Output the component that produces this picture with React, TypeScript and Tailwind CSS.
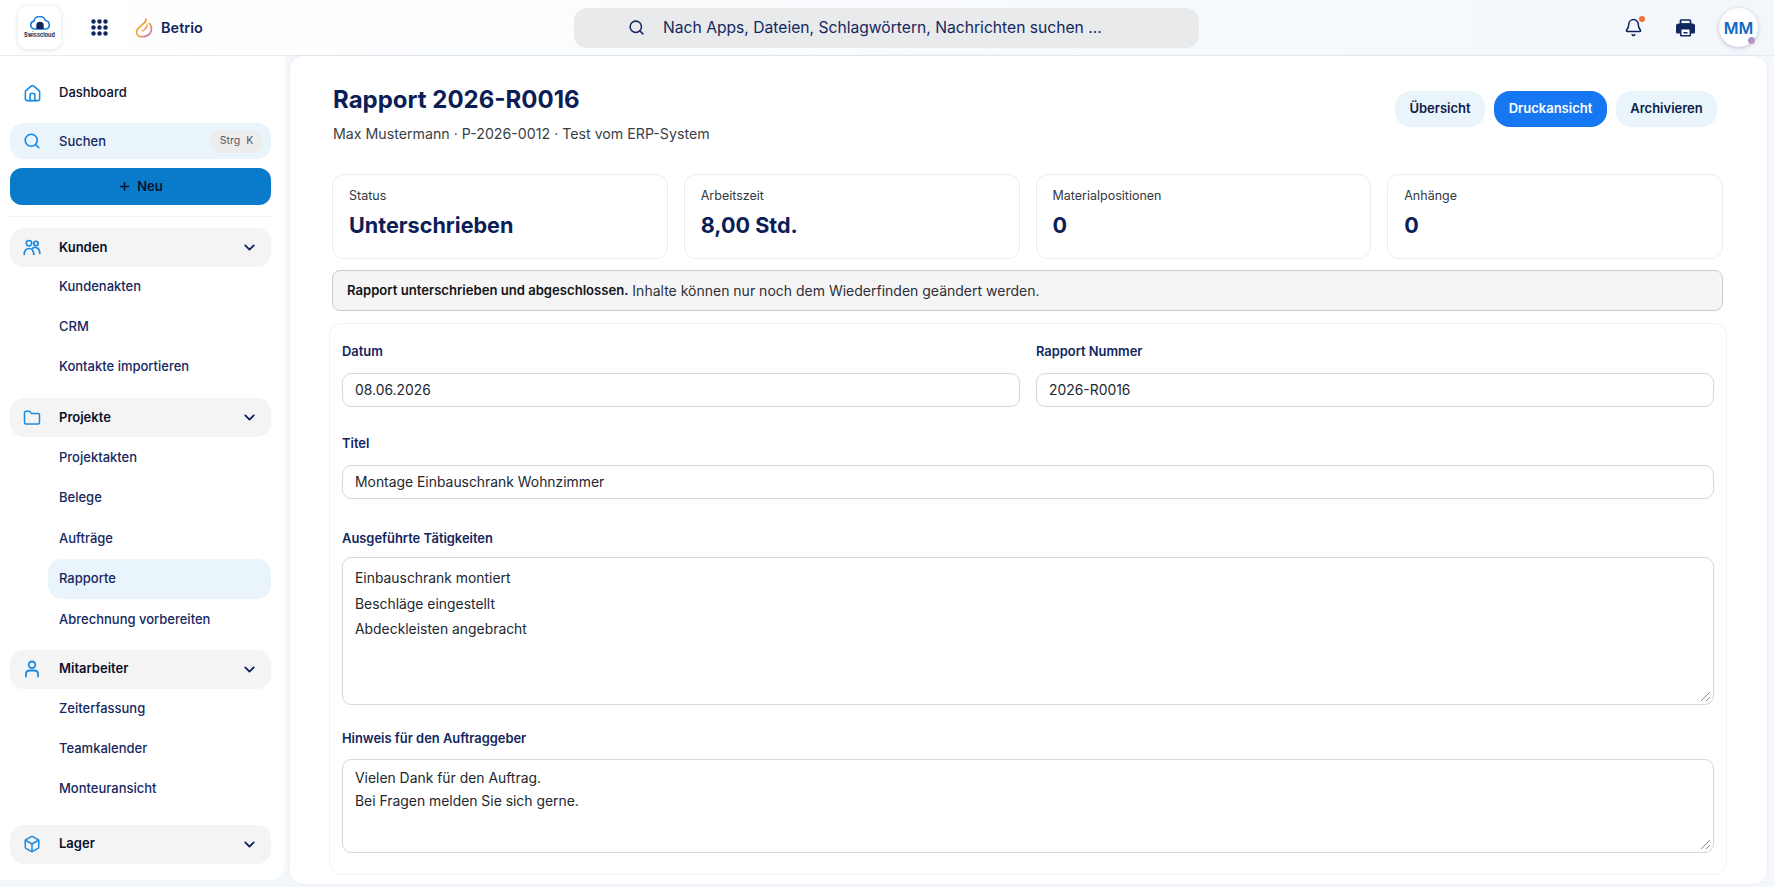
import React from "react";
import { Home, Search, Folder, Box, ChevronDown, Bell, Plus } from "lucide-react";

const font = { fontFamily: "Inter, 'Liberation Sans', sans-serif" };

function UsersIcon() {
  return (
    <svg width="18" height="18" viewBox="0 0 18 18" fill="none" stroke="currentColor" strokeWidth="1.7" strokeLinecap="round">
      <circle cx="6" cy="4.200" r="2.700" />
      <circle cx="13" cy="4.500" r="2.200" />
      <path d="M1.200 15.500c.2-3.600 2-6 4.800-6s4.600 2.400 4.800 6" />
      <path d="M9.600 9.200c.9-.7 2-1 3.100-.8 2.400.3 3.900 2.600 4.100 6" />
    </svg>
  );
}

function PersonIcon() {
  return (
    <svg width="18" height="18" viewBox="0 0 18 18" fill="none" stroke="currentColor" strokeWidth="1.800" strokeLinecap="round">
      <circle cx="9" cy="4.800" r="3.300" />
      <path d="M3 16.500v-2.500c0-2.200 1.800-3.500 4-3.500h4c2.200 0 4 1.300 4 3.500v2.500" />
    </svg>
  );
}

function PrinterIcon() {
  return (
    <svg width="19" height="18" viewBox="0 0 19 18" className="mr-[24px]">
      <path d="M4.500 5V1.800c0-.5.400-.8.800-.8h8.400c.4 0 .8.300.8.800V5Z" fill="none" stroke="#12265e" strokeWidth="1.700" />
      <path d="M2.500 4.500h14A2.500 2.500 0 0 1 19 7v6a1.500 1.500 0 0 1-1.500 1.500H15V11H4v3.500H1.500A1.500 1.500 0 0 1 0 13V7a2.500 2.500 0 0 1 2.500-2.500Z" fill="#12265e" />
      <path d="M4 9.500h11V16.500a1 1 0 0 1-1 1H5a1 1 0 0 1-1-1Z" fill="#12265e" />
      <rect x="5.500" y="10.500" width="8" height="5.500" fill="#fff" />
      <rect x="7.500" y="13" width="4" height="1.500" fill="#12265e" />
    </svg>
  );
}

function Group({ icon, label, items, active, itemH = "h-[40px]", top }: { icon: React.ReactNode; label: string; items?: string[]; active?: string; itemH?: string; top: string }) {
  return (
    <div className={`flex flex-col ${top}`}>
      <div className="flex h-[39px] items-center rounded-[14px] bg-[#f4f4f5] pl-[13px] pr-[13px]">
        <span className="flex w-[36px] text-[#1a8ae0]">{icon}</span>
        <span className="flex-1 text-[13px] font-semibold text-[#0b0f2a]">{label}</span>
        <ChevronDown size={17} strokeWidth={2.6} className="text-[#0d2258]" />
      </div>
      {items && (
        <div className="flex flex-col">
          {items.map((t) => (
            <div key={t} className={`ml-[38px] flex ${itemH} items-center rounded-[14px] pl-[11px] text-[13px] font-medium text-[#14275f] ${t === active ? "bg-[#eaf4fb]" : ""}`}>
              {t}
            </div>
          ))}
        </div>
      )}
    </div>
  );
}

function Sidebar() {
  return (
    <aside className="flex h-[824px] w-[285px] shrink-0 flex-col rounded-br-[16px] bg-white pl-[10px] pr-[14px] pt-[18px]">
      <div className="flex h-[38px] items-center pl-[13px]">
        <span className="flex w-[36px] text-[#1a8ae0]"><Home size={19} strokeWidth={2} /></span>
        <span className="text-[13px] font-medium text-[#0b0f2a]">Dashboard</span>
      </div>
      <div className="mt-[11px] flex h-[36px] items-center rounded-[14px] bg-[#eaf4fb] pl-[13px] pr-[9px]">
        <span className="flex w-[36px] text-[#1a8ae0]"><Search size={18} strokeWidth={2.2} /></span>
        <span className="flex-1 pt-[2px] text-[13px] font-medium text-[#14275f]">Suchen</span>
        <span className="flex h-[23px] w-[51px] items-center justify-center gap-[6px] rounded-[9px] bg-[#ededee] text-[10.500px] text-[#55595f]">
          <span>Strg</span><span>K</span>
        </span>
      </div>
      <div className="mt-[9px] flex h-[37px] items-center justify-center gap-[6px] rounded-[12px] bg-[#0a7bca] text-[13px] font-semibold text-[#06132c]">
        <Plus size={13} strokeWidth={2.8} />
        <span>Neu</span>
      </div>
      <div className="mb-[11px] mt-[11px] h-px bg-[#f1f2f4]" />
      <Group top="" icon={<UsersIcon />} label="Kunden" items={["Kundenakten", "CRM", "Kontakte importieren"]} />
      <Group top="mt-[11px]" itemH="h-[40.500px]" icon={<Folder size={18} strokeWidth={2} />} label="Projekte" items={["Projektakten", "Belege", "Aufträge", "Rapporte", "Abrechnung vorbereiten"]} active="Rapporte" />
      <Group top="mt-[10px]" icon={<PersonIcon />} label="Mitarbeiter" items={["Zeiterfassung", "Teamkalender", "Monteuransicht"]} />
      <Group top="mt-[16px]" icon={<Box size={18} strokeWidth={2} />} label="Lager" />
    </aside>
  );
}

function Header() {
  return (
    <header className="flex h-[56px] shrink-0 items-center justify-between border-b border-[#e9ebee] bg-gradient-to-r from-white to-[#f3f7fc] pl-[18px] pr-[16px]">
      <div className="flex w-[556px] items-center">
        <div className="flex h-[43px] w-[43px] flex-col items-center justify-center rounded-[9px] bg-white shadow-[0_1px_5px_rgba(20,40,80,0.14)]">
          <svg width="22" height="15" viewBox="0 0 22 15" fill="none">
            <path d="M5.500 13a4 4 0 0 1-.6-7.900A6 6 0 0 1 16.400 4.500a4.300 4.300 0 0 1 .4 8.500Z" stroke="#1a7fdc" strokeWidth="1.600" />
            <path d="M7.300 13V9.500a3.700 3.700 0 0 1 7.400 0V13Z" fill="#12265e" />
          </svg>
          <span className="mt-[1px] text-[5.500px] font-bold leading-[7px] text-[#25304d]">Swisscloud</span>
        </div>
        <svg className="ml-[30px]" width="17" height="17" viewBox="0 0 17 17" fill="#12265e">
          {[2.5, 8.5, 14.5].flatMap((y) =>
            [2.5, 8.5, 14.5].map((x) => <circle key={`${x}-${y}`} cx={x} cy={y} r="2.2" />)
          )}
        </svg>
        <svg className="ml-[27px]" width="18" height="20" viewBox="0 0 18 20" fill="none">
          <defs>
            <linearGradient id="flame" x1="0" y1="0" x2="1" y2="1">
              <stop offset="0" stopColor="#f9a21b" />
              <stop offset="0.55" stopColor="#f59a3a" />
              <stop offset="1" stopColor="#b36bf0" />
            </linearGradient>
          </defs>
          <path d="M11 1c.4 3-2 4-4.500 6.300C4 9.500 1.500 11 1.500 14a5 5 0 0 0 5 4.700c5.500.4 10-3 10-8 0-2.200-.9-3.900-2-5.200" stroke="url(#flame)" strokeWidth="1.700" strokeLinecap="round" />
          <path d="M12 7c.2 2.500-1.500 4-4.500 6" stroke="url(#flame)" strokeWidth="1.500" strokeLinecap="round" />
        </svg>
        <span className="ml-[8px] mt-[1px] text-[14.500px] font-semibold text-[#12265e]">Betrio</span>
      </div>
      <div className="flex h-[40px] w-[625px] items-center rounded-[13px] bg-[#e9eaec] pl-[54px]">
        <Search size={17} strokeWidth={2.2} className="text-[#14275f]" />
        <span className="ml-[18px] text-[15.650px] text-[#14275f]">Nach Apps, Dateien, Schlagwörtern, Nachrichten suchen ...</span>
      </div>
      <div className="flex w-[559px] items-center justify-end">
        <span className="relative mr-[33px] flex text-[#0d2258]">
          <Bell size={19} strokeWidth={1.9} />
          <span className="absolute right-[-2px] top-[-2px] h-[6px] w-[6px] rounded-full bg-[#f4702e]" />
        </span>
        <PrinterIcon />
        <span className="relative flex h-[39px] w-[39px] items-center justify-center rounded-full bg-white text-[16px] font-semibold text-[#1168c4] shadow-[0_1px_4px_rgba(20,40,80,0.25)]">
          MM
          <span className="absolute bottom-[3px] right-[3px] h-[7px] w-[7px] rounded-full bg-gradient-to-br from-[#6f9bec] to-[#e58aa0]" />
        </span>
      </div>
    </header>
  );
}

function Stat({ label, value }: { label: string; value: string }) {
  return (
    <div className="flex h-[85px] flex-col rounded-[12px] border border-[#e9ebef] bg-white px-[16px] pt-[12px]">
      <span className="text-[12.500px] text-[#33383f]">{label}</span>
      <span className="mt-[4px] text-[21.600px] font-bold leading-[30px] text-[#0b1e55]">{value}</span>
    </div>
  );
}

const inputCls = "flex h-[34px] items-center rounded-[9px] border border-[#d5d8de] bg-white px-[12px] text-[13.900px] text-[#23272e]";

function Field({ label, cls, labelCls, children }: { label: string; cls?: string; labelCls: string; children: React.ReactNode }) {
  return (
    <div className={`flex flex-col ${cls ?? ""}`}>
      <span className={`h-[17px] text-[12.900px] font-semibold leading-[17px] text-[#12265e] ${labelCls}`}>{label}</span>
      {children}
    </div>
  );
}

function Area({ h, pad, lines }: { h: string; pad: string; lines: string[] }) {
  return (
    <div className={`relative rounded-[9px] border border-[#d5d8de] bg-white px-[12px] text-[13.900px] text-[#23272e] ${h} ${pad}`}>
      {lines.map((l) => <div key={l}>{l}</div>)}
      <svg className="absolute bottom-[2px] right-[2px]" width="11" height="11" viewBox="0 0 11 11" stroke="#8a8d93" strokeWidth="1">
        <path d="M1 10 10 1M6 10l4-4" />
      </svg>
    </div>
  );
}

function Main() {
  return (
    <main className="mb-[1px] ml-[5px] mr-[7px] flex flex-1 flex-col rounded-[14px] bg-white pl-[43px] pr-[44px] pt-[29px] shadow-[0_0_4px_rgba(30,60,110,0.06)]">
      <div className="flex items-start justify-between">
        <div className="flex flex-col">
          <h1 className="text-[24px] font-bold leading-[30px] text-[#0b1e55]">Rapport 2026-R0016</h1>
          <p className="mt-[9px] text-[14.200px] leading-[20px] text-[#3a3f47]">Max Mustermann · P-2026-0012 · Test vom ERP-System</p>
        </div>
        <div className="mr-[6px] mt-[6px] flex gap-[9px] text-[13px] font-semibold">
          <span className="flex h-[36px] w-[90px] items-center justify-center rounded-[16px] bg-[#eaf4fb] text-[#0d1c4a]">Übersicht</span>
          <span className="flex h-[36px] w-[113px] items-center justify-center rounded-[16px] bg-[#1677f2] text-white">Druckansicht</span>
          <span className="flex h-[36px] w-[101px] items-center justify-center rounded-[16px] bg-[#eaf4fb] text-[#0d1c4a]">Archivieren</span>
        </div>
      </div>
      <div className="-ml-[1px] mt-[30px] grid grid-cols-4 gap-[16px]">
        <Stat label="Status" value="Unterschrieben" />
        <Stat label="Arbeitszeit" value="8,00 Std." />
        <Stat label="Materialpositionen" value="0" />
        <Stat label="Anhänge" value="0" />
      </div>
      <div className="-ml-[1px] mt-[11px] flex h-[41px] items-center rounded-[8px] border border-[#c9ccd2] bg-[#f5f5f6] px-[14px] text-[14px] text-[#2c3036]">
        <strong className="text-[13.100px] font-semibold text-[#111418]">Rapport unterschrieben und abgeschlossen.</strong>
        <span className="ml-[4px]">Inhalte können nur noch dem Wiederfinden geändert werden.</span>
      </div>
      <div className="-mx-[4px] mt-[12px] flex h-[552px] flex-col rounded-[12px] border border-[#f1f2f4] bg-white px-[12px] pt-[19px]">
        <div className="grid grid-cols-2 gap-[16px]">
          <Field label="Datum" labelCls="mb-[13px]"><div className={inputCls}>08.06.2026</div></Field>
          <Field label="Rapport Nummer" labelCls="mb-[13px]"><div className={inputCls}>2026-R0016</div></Field>
        </div>
        <Field label="Titel" cls="mt-[28px]" labelCls="mb-[13px]"><div className={inputCls}>Montage Einbauschrank Wohnzimmer</div></Field>
        <Field label="Ausgeführte Tätigkeiten" cls="mt-[31px]" labelCls="mb-[10px]">
          <Area h="h-[148px]" pad="pt-[8px] leading-[25.500px]" lines={["Einbauschrank montiert", "Beschläge eingestellt", "Abdeckleisten angebracht"]} />
        </Field>
        <Field label="Hinweis für den Auftraggeber" cls="mt-[25px]" labelCls="mb-[12px]">
          <Area h="h-[94px]" pad="pt-[7px] leading-[23px]" lines={["Vielen Dank für den Auftrag.", "Bei Fragen melden Sie sich gerne."]} />
        </Field>
      </div>
    </main>
  );
}

export default function App() {
  return (
    <div style={font} className="flex h-[887px] w-full flex-col overflow-hidden bg-[#f4f8fc] antialiased">
      <Header />
      <div className="flex h-[831px] items-start pb-[1px]">
        <Sidebar />
        <div className="flex h-[829px] flex-1"><Main /></div>
      </div>
    </div>
  );
}
